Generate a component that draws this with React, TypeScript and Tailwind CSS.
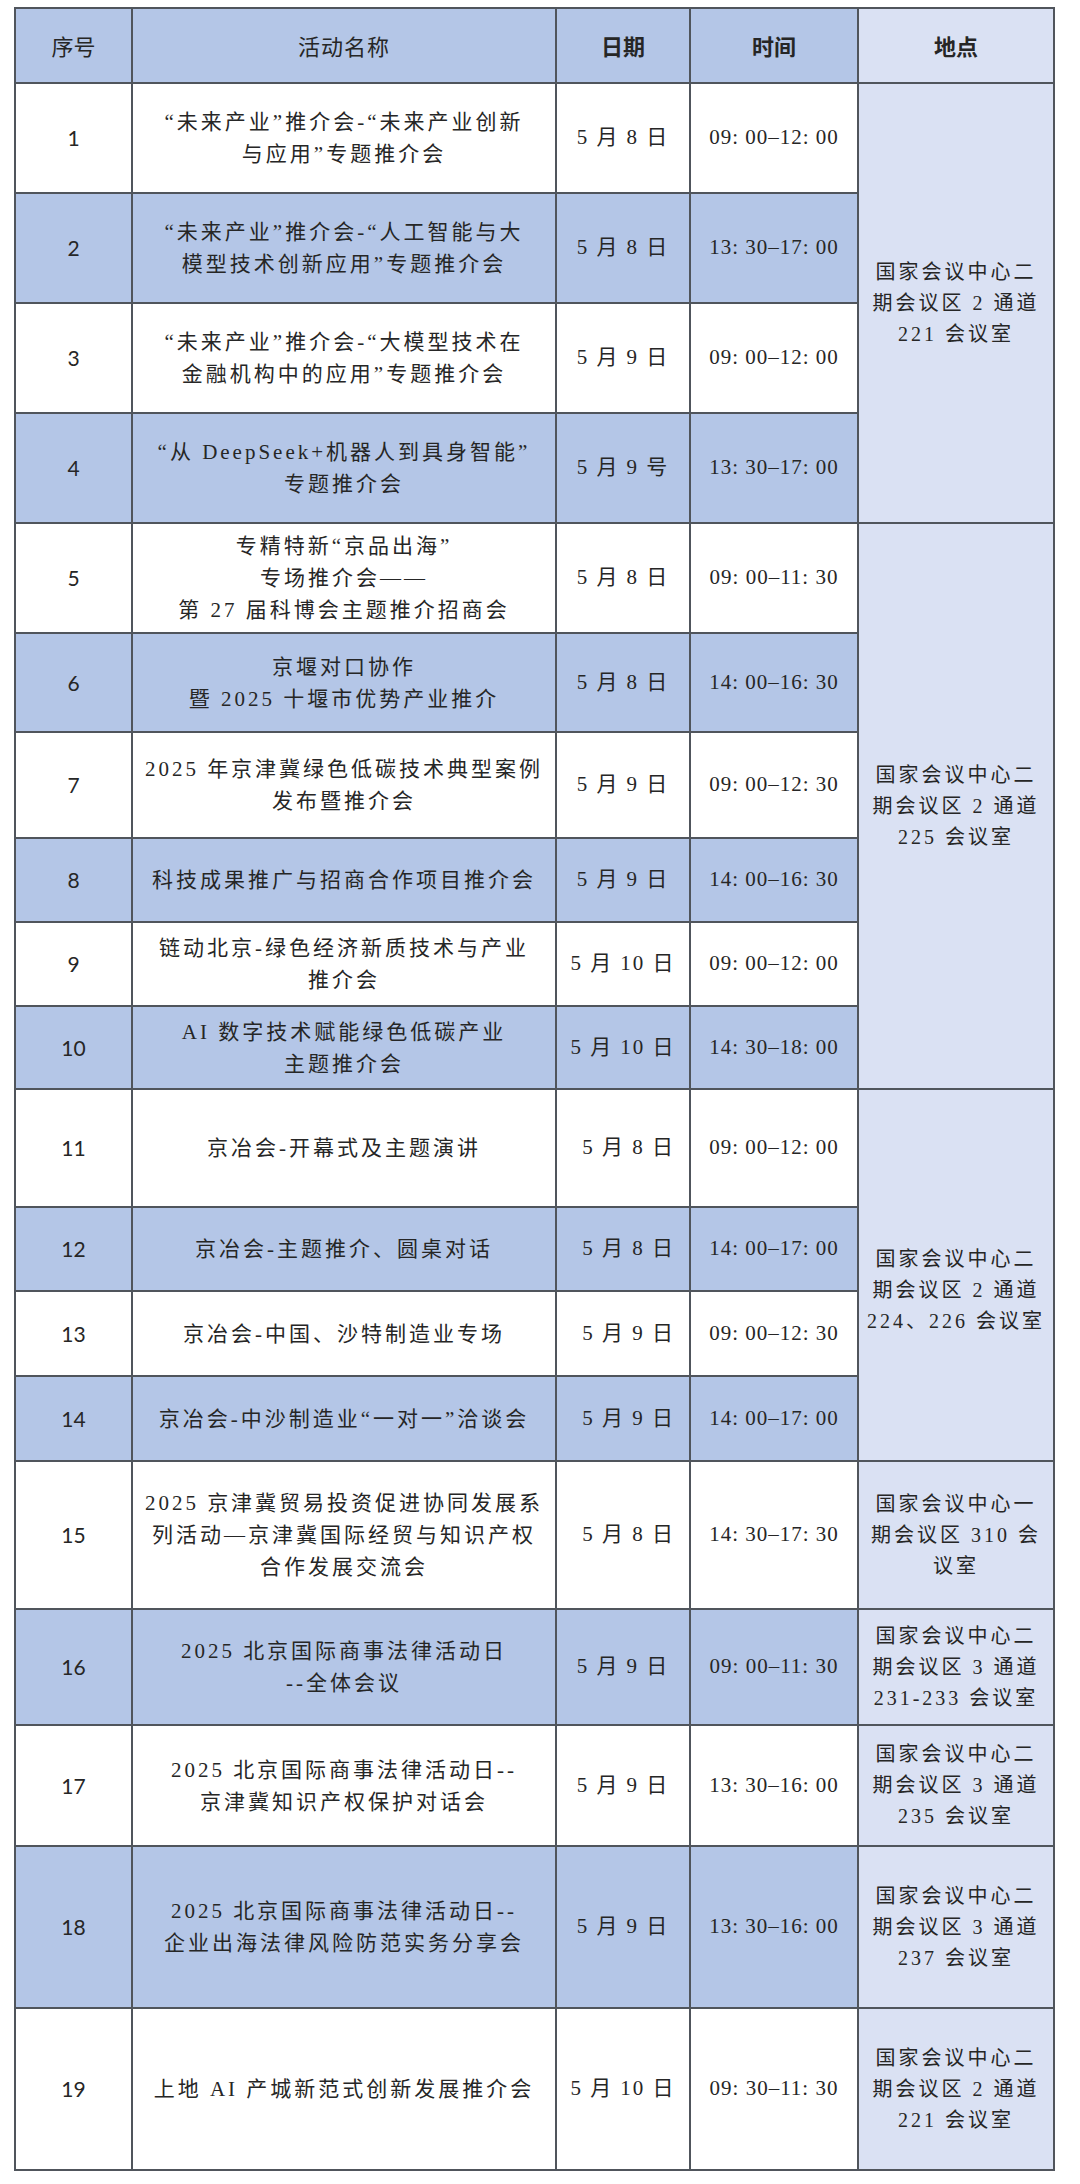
import React from 'react'

type Row = {
  n: number
  name: string[]
  date: string
  time: string
  h: number
  loc?: { span: number; lines: string[] }
  dateRight?: boolean
}

const rows: Row[] = [
  { n: 1, name: ['“未来产业”推介会-“未来产业创新', '与应用”专题推介会'], date: '5 月 8 日', time: '09: 00–12: 00', h: 110, loc: { span: 4, lines: ['国家会议中心二', '期会议区 2 通道', '221 会议室'] } },
  { n: 2, name: ['“未来产业”推介会-“人工智能与大', '模型技术创新应用”专题推介会'], date: '5 月 8 日', time: '13: 30–17: 00', h: 110 },
  { n: 3, name: ['“未来产业”推介会-“大模型技术在', '金融机构中的应用”专题推介会'], date: '5 月 9 日', time: '09: 00–12: 00', h: 110 },
  { n: 4, name: ['“从 DeepSeek+机器人到具身智能”', '专题推介会'], date: '5 月 9 号', time: '13: 30–17: 00', h: 110 },
  { n: 5, name: ['专精特新“京品出海”', '专场推介会——', '第 27 届科博会主题推介招商会'], date: '5 月 8 日', time: '09: 00–11: 30', h: 110, loc: { span: 6, lines: ['国家会议中心二', '期会议区 2 通道', '225 会议室'] } },
  { n: 6, name: ['京堰对口协作', '暨 2025 十堰市优势产业推介'], date: '5 月 8 日', time: '14: 00–16: 30', h: 99 },
  { n: 7, name: ['2025 年京津冀绿色低碳技术典型案例', '发布暨推介会'], date: '5 月 9 日', time: '09: 00–12: 30', h: 106 },
  { n: 8, name: ['科技成果推广与招商合作项目推介会'], date: '5 月 9 日', time: '14: 00–16: 30', h: 84 },
  { n: 9, name: ['链动北京-绿色经济新质技术与产业', '推介会'], date: '5 月 10 日', time: '09: 00–12: 00', h: 84 },
  { n: 10, name: ['AI 数字技术赋能绿色低碳产业', '主题推介会'], date: '5 月 10 日', time: '14: 30–18: 00', h: 83 },
  { n: 11, name: ['京冶会-开幕式及主题演讲'], date: '5 月 8 日', time: '09: 00–12: 00', h: 118, dateRight: true, loc: { span: 4, lines: ['国家会议中心二', '期会议区 2 通道', '224、226 会议室'] } },
  { n: 12, name: ['京冶会-主题推介、圆桌对话'], date: '5 月 8 日', time: '14: 00–17: 00', h: 84, dateRight: true },
  { n: 13, name: ['京冶会-中国、沙特制造业专场'], date: '5 月 9 日', time: '09: 00–12: 30', h: 85, dateRight: true },
  { n: 14, name: ['京冶会-中沙制造业“一对一”洽谈会'], date: '5 月 9 日', time: '14: 00–17: 00', h: 85, dateRight: true },
  { n: 15, name: ['2025 京津冀贸易投资促进协同发展系', '列活动—京津冀国际经贸与知识产权', '合作发展交流会'], date: '5 月 8 日', time: '14: 30–17: 30', h: 148, dateRight: true, loc: { span: 1, lines: ['国家会议中心一', '期会议区 310 会', '议室'] } },
  { n: 16, name: ['2025 北京国际商事法律活动日', '--全体会议'], date: '5 月 9 日', time: '09: 00–11: 30', h: 116, loc: { span: 1, lines: ['国家会议中心二', '期会议区 3 通道', '231-233 会议室'] } },
  { n: 17, name: ['2025 北京国际商事法律活动日--', '京津冀知识产权保护对话会'], date: '5 月 9 日', time: '13: 30–16: 00', h: 121, loc: { span: 1, lines: ['国家会议中心二', '期会议区 3 通道', '235 会议室'] } },
  { n: 18, name: ['2025 北京国际商事法律活动日--', '企业出海法律风险防范实务分享会'], date: '5 月 9 日', time: '13: 30–16: 00', h: 162, loc: { span: 1, lines: ['国家会议中心二', '期会议区 3 通道', '237 会议室'] } },
  { n: 19, name: ['上地 AI 产城新范式创新发展推介会'], date: '5 月 10 日', time: '09: 30–11: 30', h: 162, loc: { span: 1, lines: ['国家会议中心二', '期会议区 2 通道', '221 会议室'] } },
]

const cell = 'border-2 border-[#50555c] align-middle text-center'
const serif = "font-['Liberation_Serif','Noto_Sans_CJK_SC',serif]"

export default function App() {
  return (
    <div className="min-h-[2184px] w-[1080px] bg-white pl-[14px] pt-[7px] text-[#262626]">
      <table className="w-[1039px] table-fixed border-collapse">
        <colgroup>
          <col className="w-[117px]" />
          <col className="w-[424px]" />
          <col className="w-[134px]" />
          <col className="w-[168px]" />
          <col className="w-[196px]" />
        </colgroup>
        <thead>
          <tr className="h-[75px]">
            <th className={`${cell} bg-[#b4c6e7] font-['Noto_Sans_CJK_SC',sans-serif] text-[22px] font-normal`}>序号</th>
            <th className={`${cell} bg-[#b4c6e7] font-['Noto_Sans_CJK_SC',sans-serif] text-[22px] font-normal tracking-[1px]`}>活动名称</th>
            <th className={`${cell} bg-[#b4c6e7] font-['Noto_Sans_CJK_SC',sans-serif] text-[22px] font-semibold`}>日期</th>
            <th className={`${cell} bg-[#b4c6e7] font-['Noto_Sans_CJK_SC',sans-serif] text-[22px] font-semibold`}>时间</th>
            <th className={`${cell} bg-[#dae1f3] font-['Noto_Sans_CJK_SC',sans-serif] text-[22px] font-semibold`}>地点</th>
          </tr>
        </thead>
        <tbody>
          {rows.map((r) => {
            const bg = r.n % 2 === 0 ? 'bg-[#b4c6e7]' : 'bg-white'
            return (
              <tr key={r.n} style={{ height: r.h }}>
                <td className={`${cell} ${bg} font-['Lato',sans-serif] text-[21px]`}>{r.n}</td>
                <td className={`${cell} ${bg} ${serif} text-[21px] leading-[32px] tracking-[3px]`}>
                  {r.name.map((l, i) => (
                    <div key={i} className="whitespace-nowrap">{l}</div>
                  ))}
                </td>
                <td className={`${cell} ${bg} ${serif} text-[21px] tracking-[2px] whitespace-pre ${r.dateRight ? 'pr-[14px] text-right' : ''}`}>
                  {r.date}
                </td>
                <td className={`${cell} ${bg} ${serif} text-[21px] tracking-[1px] whitespace-nowrap`}>{r.time}</td>
                {r.loc && (
                  <td
                    rowSpan={r.loc.span}
                    className={`${cell} bg-[#dae1f3] ${serif} text-[20px] leading-[31px] tracking-[3px] ${r.n === 11 ? 'pt-[30px]' : ''}`}
                  >
                    {r.loc.lines.map((l, i) => (
                      <div key={i} className="whitespace-nowrap">{l}</div>
                    ))}
                  </td>
                )}
              </tr>
            )
          })}
        </tbody>
      </table>
    </div>
  )
}
